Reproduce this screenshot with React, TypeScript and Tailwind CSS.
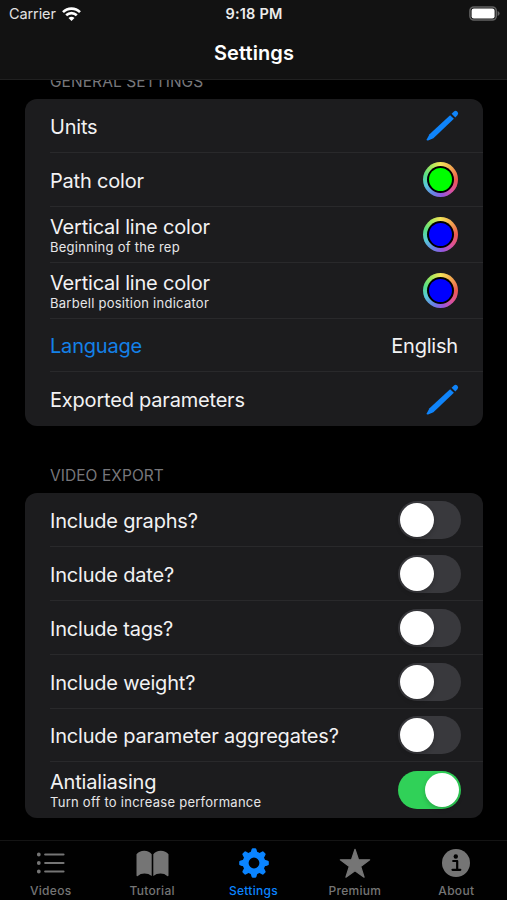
import type { ReactNode } from "react";

function Row({ title, sub, h, last, accent, children }: {
  title: string; sub?: string; h: string; last?: boolean; accent?: boolean; children: ReactNode;
}) {
  return (
    <div className={`flex shrink-0 pl-[25px] ${h}`}>
      <div className={`flex flex-1 items-center justify-between ${last ? "" : "border-b border-[#29292b]"}`}>
        <div className={`flex flex-col whitespace-nowrap ${sub ? "" : "pt-[2px]"}`}>
          <span className={`text-[20px] leading-[24px] tracking-[-0.2px] ${accent ? "text-[#1481e8]" : "text-[#f2f2f3]"}`}>{title}</span>
          {sub && <span className="mt-px text-[13px] leading-[15px] tracking-[0.26px] text-[#e6e6e8]">{sub}</span>}
        </div>
        {children}
      </div>
    </div>
  );
}

function Pencil() {
  return (
    <svg className="mb-px mr-6 h-8 w-[34px]" viewBox="0 0 34 32" fill="#0f84fa">
      <path d="M25.1 6.2 28.9 9.8 8.4 29.2 3.1 31.5Q1.3 31.9 1.8 30.2L4.5 25.2Z" />
      <path d="M26.6 4.8 29 2.5Q30.5 1.1 32.2 2.5 34 4.2 32.6 6L30.3 8.4Z" />
    </svg>
  );
}

function ColorWell({ fill }: { fill: string }) {
  return (
    <span className="mr-[25px] flex size-[35px] items-center justify-center rounded-full bg-[conic-gradient(#f3e35a,#f3a64f_12%,#ec5a50_25%,#dc519b_37%,#9456df_48%,#6683e5_58%,#57cbd8_69%,#57df85_80%,#a2e85b_90%,#f3e35a)]">
      <span className="flex size-[27px] items-center justify-center rounded-full bg-black">
        <span className={`size-[23px] rounded-full ${fill}`} />
      </span>
    </span>
  );
}

function Toggle({ on }: { on?: boolean }) {
  return (
    <span className={`mr-[22px] flex h-[38px] w-[63px] items-center rounded-full px-[2px] ${on ? "justify-end bg-[#30d158]" : "bg-[#39393d]"}`}>
      <span className="size-[34px] rounded-full bg-white shadow-[0_2px_5px_rgba(0,0,0,0.2)]" />
    </span>
  );
}

function Tab({ label, active, children }: { label: string; active?: boolean; children: ReactNode }) {
  return (
    <div className={`flex flex-1 flex-col items-center ${active ? "text-[#0a84ff]" : "text-[#757575]"}`}>
      <div className="flex h-[42px] items-center justify-center pt-[2px]">{children}</div>
      <span className="text-[12px] font-medium leading-[15px] tracking-[0.3px]">{label}</span>
    </div>
  );
}

const teeth = [0, 45, 90, 135, 180, 225, 270, 315];

export default function App() {
  return (
    <div className="flex h-[900px] w-[507px] flex-col overflow-hidden bg-black font-['Inter','Liberation_Sans',sans-serif]">
      <header className="h-[80px] shrink-0 border-b border-[#202020] bg-[#121212] text-white">
        <div className="grid h-[27px] grid-cols-3 items-center pl-[8px] pr-[7px]">
          <div className="flex items-center gap-[6px] pl-px text-[#e2e2e2]">
            <span className="text-[14.5px] leading-[18px] tracking-[-0.1px]">Carrier</span>
            <svg className="h-[14px] w-[19px]" viewBox="0 0 19 14" fill="none" stroke="white" strokeWidth="2.6">
              <path d="M1 5.1C5.7.4 13.3.4 18 5.1" />
              <path d="M4.2 8.3C7.2 5.4 11.8 5.4 14.8 8.3" />
              <path d="m9.5 14-3-3.1q3-2.5 6 0Z" fill="white" stroke="none" />
            </svg>
          </div>
          <span className="text-center text-[14.5px] font-semibold leading-[18px] tracking-[0.2px] text-[#ececec]">9:18 PM</span>
          <svg className="h-[15px] w-[31px] justify-self-end" viewBox="0 0 31 15">
            <rect x=".9" y=".9" width="26.4" height="13.2" rx="4" fill="#151515" stroke="#626262" strokeWidth="1.5" />
            <rect x="2.6" y="2.6" width="23" height="9.8" rx="2.2" fill="white" />
            <path d="M28.6 5q2 .8 2 2.5t-2 2.5Z" fill="#626262" />
          </svg>
        </div>
        <h1 className="pl-px pt-[14px] text-center text-[20px] font-semibold leading-[24px] tracking-[0.1px]">Settings</h1>
      </header>

      <main className="flex h-[760px] shrink-0 flex-col overflow-hidden px-[25px]">
        <h2 className="-mt-[8px] h-[27px] shrink-0 pl-[25px] text-[15.5px] leading-[20px] tracking-[0.06px] text-[#77777b]">GENERAL SETTINGS</h2>
        <section className="flex w-[458px] shrink-0 flex-col overflow-hidden rounded-[12px] bg-[#1c1c1e]">
          <Row title="Units" h="h-[54px]"><Pencil /></Row>
          <Row title="Path color" h="h-[54px]"><ColorWell fill="bg-[#00ff00]" /></Row>
          <Row title="Vertical line color" sub="Beginning of the rep" h="h-[56px]"><ColorWell fill="bg-[#0000ff]" /></Row>
          <Row title="Vertical line color" sub="Barbell position indicator" h="h-[56px]"><ColorWell fill="bg-[#0000ff]" /></Row>
          <Row title="Language" accent h="h-[53px]">
            <span className="mr-[25px] pt-[2px] text-[20px] leading-[24px] tracking-[-0.2px] text-[#f2f2f3]">English</span>
          </Row>
          <Row title="Exported parameters" h="h-[54px]" last><Pencil /></Row>
        </section>

        <h2 className="mt-[40px] h-[27px] shrink-0 pl-[25px] text-[15.5px] leading-[20px] tracking-[0.06px] text-[#77777b]">VIDEO EXPORT</h2>
        <section className="flex w-[458px] shrink-0 flex-col overflow-hidden rounded-[12px] bg-[#1c1c1e]">
          <Row title="Include graphs?" h="h-[54px]"><Toggle /></Row>
          <Row title="Include date?" h="h-[54px]"><Toggle /></Row>
          <Row title="Include tags?" h="h-[54px]"><Toggle /></Row>
          <Row title="Include weight?" h="h-[54px]"><Toggle /></Row>
          <Row title="Include parameter aggregates?" h="h-[53px]"><Toggle /></Row>
          <Row title="Antialiasing" sub="Turn off to increase performance" h="h-[56px]" last><Toggle on /></Row>
        </section>
      </main>

      <nav className="flex h-[60px] shrink-0 border-t border-[#141414] bg-[#010101]">
        <Tab label="Videos">
          <svg className="h-[22px] w-[29px]" viewBox="0 0 29 22" stroke="currentColor" strokeWidth="2.2" strokeLinecap="round">
            <path d="M9.2 2.5h18.3M9.2 11h18.3M9.2 19.5h18.3" />
            <path d="M2.8 2.5h.01M2.8 11h.01M2.8 19.5h.01" strokeWidth="3.8" />
          </svg>
        </Tab>
        <Tab label="Tutorial">
          <svg className="h-[27px] w-[33px]" viewBox="0 0 33 27" fill="currentColor">
            <path d="M.5 4.3Q3.2.8 8.2.8t7.5 3.5V26Q12.6 23.6 8.5 23.6T1.8 26Q.5 26.8.5 25Z" />
            <path d="M32.5 4.3Q29.8.8 24.8.8t-7.5 3.5V26Q20.4 23.6 24.5 23.6T31.2 26Q32.5 26.8 32.5 25Z" />
          </svg>
        </Tab>
        <Tab label="Settings" active>
          <svg className="size-[30px]" viewBox="-15 -15 30 30" fill="currentColor">
            <circle r="8.4" fill="none" stroke="currentColor" strokeWidth="6" />
            {teeth.map((a) => (
              <path key={a} transform={`rotate(${a})`} d="M-3.6-10-2.3-14Q-2-14.8-1.2-14.8H1.2Q2-14.8 2.3-14L3.6-10Z" />
            ))}
          </svg>
        </Tab>
        <Tab label="Premium">
          <svg className="h-[31px] w-[32px]" viewBox="0 0 32 31" fill="currentColor" stroke="currentColor" strokeWidth="1.2" strokeLinejoin="round">
            <path d="m16 1.3 3.5 10.4 11.2.1-9 6.6 3.4 10.8L16 22.7l-9.1 6.5 3.4-10.8-9-6.6 11.2-.1Z" />
          </svg>
        </Tab>
        <Tab label="About">
          <svg className="size-[28px]" viewBox="0 0 28 28">
            <circle cx="14" cy="14" r="14" fill="currentColor" />
            <circle cx="13.8" cy="7.5" r="2.2" fill="#010101" />
            <path d="M11.2 12h4v8.7M10.5 20.8h7.8" fill="none" stroke="#010101" strokeWidth="2.2" strokeLinecap="round" strokeLinejoin="round" />
          </svg>
        </Tab>
      </nav>
    </div>
  );
}
